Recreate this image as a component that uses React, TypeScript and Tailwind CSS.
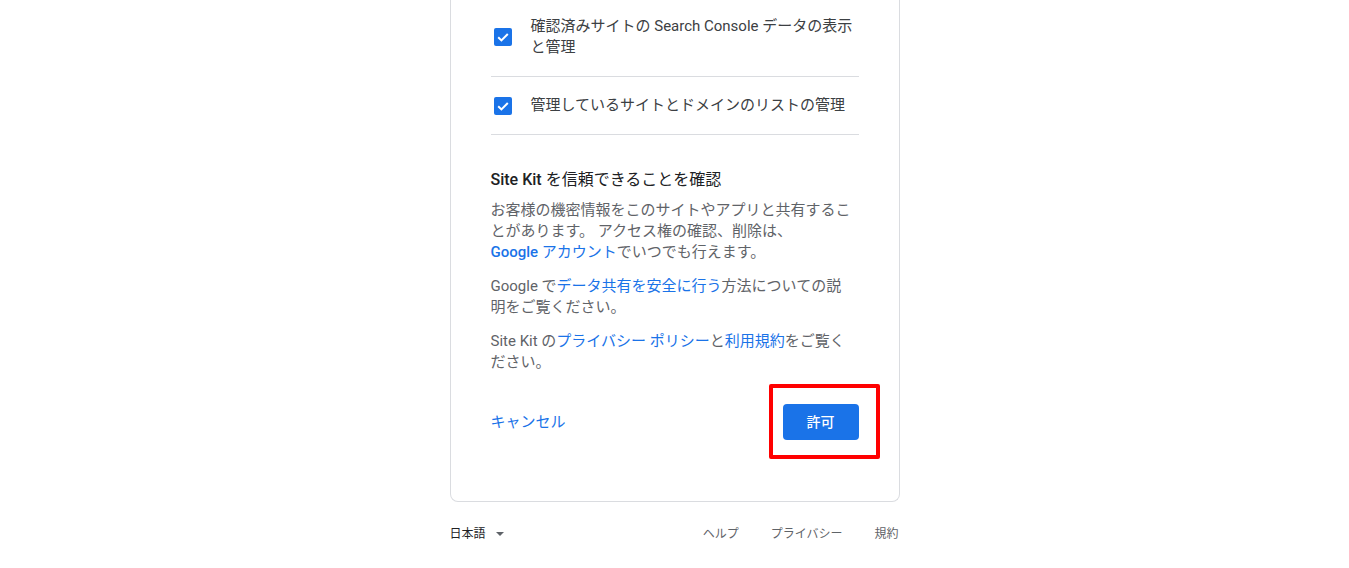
import React from 'react';

const CheckBox: React.FC = () => (
  <div className="flex h-[18px] w-6 flex-shrink-0 items-center justify-center">
    <svg width="18" height="18" viewBox="0 0 18 18">
      <rect width="18" height="18" rx="2" fill="#1a73e8" />
      <path d="M4.2 9.3 L7.4 12.4 L13.8 6" fill="none" stroke="#ffffff" strokeWidth="2" />
    </svg>
  </div>
);

const App: React.FC = () => {
  return (
    <div className="flex min-h-screen flex-col items-center bg-white font-['Roboto','Noto_Sans_CJK_JP',sans-serif] text-[#202124]">
      {/* Consent card, top scrolled out of view */}
      <div className="w-[450px] rounded-b-lg border-x border-b border-[#dadce0] px-10 pb-[61px]">
        <ul>
          <li className="flex items-center gap-4 border-b border-[#dadce0] pt-4 pb-[18px]">
            <CheckBox />
            <p className="text-[15px] leading-[21px] text-[#3c4043]">
              確認済みサイトの Search Console データの表示と管理
            </p>
          </li>
          <li className="flex items-center gap-4 border-b border-[#dadce0] py-[18px]">
            <CheckBox />
            <p className="text-[15px] leading-[21px] text-[#3c4043]">
              管理しているサイトとドメインのリストの管理
            </p>
          </li>
        </ul>

        <h2 className="mt-[33px] text-base leading-6 text-[#202124]">
          <span className="font-medium">Site Kit</span> を信頼できることを確認
        </h2>
        <div className="mt-2 text-[15px] leading-[21px] text-[#5f6368]">
          <p>
            お客様の機密情報をこのサイトやアプリと共有することがあります。 アクセス権の確認、削除は、
            <a href="#" className="whitespace-nowrap text-[#1a73e8]">
              <span className="font-medium">Google</span> アカウント
            </a>
            でいつでも行えます。
          </p>
          <p className="mt-[13px]">
            Google で<a href="#" className="text-[#1a73e8]">データ共有を安全に行う</a>方法についての説
            <br />
            明をご覧ください。
          </p>
          <p className="mt-[13px]">
            Site Kit の<a href="#" className="text-[#1a73e8]">プライバシー ポリシー</a>と<a href="#" className="text-[#1a73e8]">利用規約</a>をご覧ください。
          </p>
        </div>

        <div className="mt-[31px] flex h-9 items-center justify-between">
          <button className="text-[15px] leading-5 text-[#1a73e8]">キャンセル</button>
          <div className="relative">
            <button className="h-9 w-[76px] rounded bg-[#1a73e8] text-sm font-medium text-white">許可</button>
            <span className="pointer-events-none absolute -top-[20px] -right-[21px] -bottom-[19px] -left-[14px] rounded-[2px] border-4 border-[#ff0000]" />
          </div>
        </div>
      </div>

      {/* Footer */}
      <div className="mt-6 flex w-[450px] items-center justify-between pr-px text-xs leading-4">
        <button className="flex items-center gap-[10px] text-[#202124]">
          日本語
          <span className="h-0 w-0 border-x-[4px] border-t-[4px] border-x-transparent border-t-[#5f6368]" />
        </button>
        <div className="flex gap-8 text-[#5f6368]">
          <a href="#">ヘルプ</a>
          <a href="#">プライバシー</a>
          <a href="#">規約</a>
        </div>
      </div>
    </div>
  );
};

export default App;
